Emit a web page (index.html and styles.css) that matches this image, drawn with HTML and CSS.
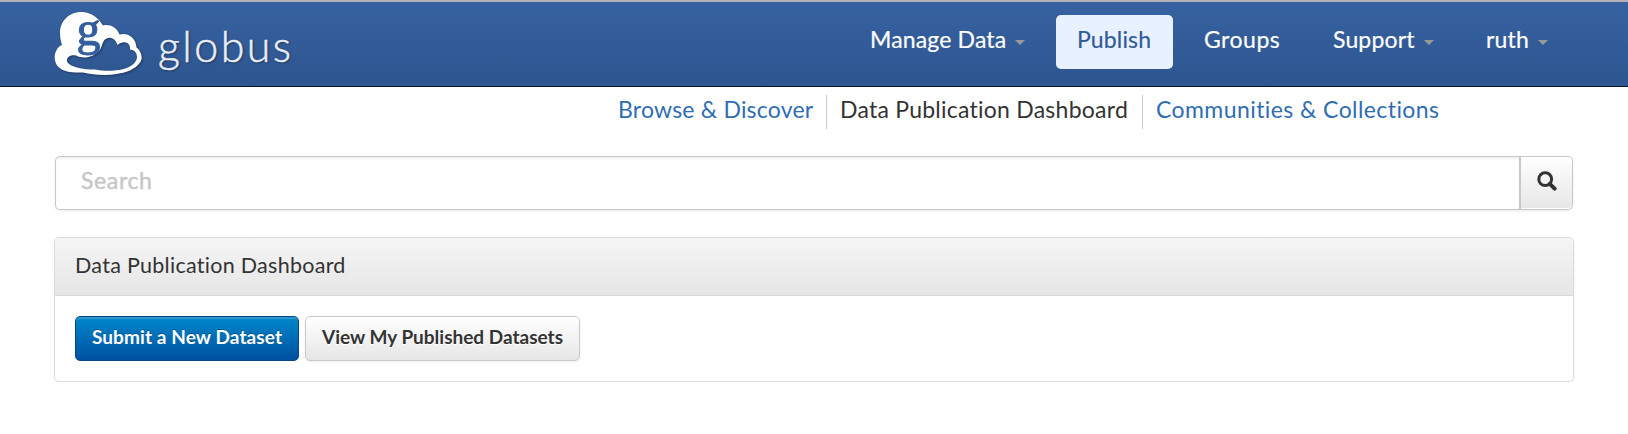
FILE: index.html
```html
<!DOCTYPE html>
<html lang="en">
<head>
<meta charset="utf-8">
<title>Globus</title>
<link rel="stylesheet" href="styles.css">
</head>
<body>
<header class="topbar">
  <a class="brand">
    <svg class="cloud" viewBox="0 0 90 66" width="90" height="66">
      <path fill="#fff" fill-rule="evenodd" d="M7 33C-1 36 -3 50 4 55.500C9 60 18 61 28 60.500C42 64 62 64 75 58.500C84 54 87 49 86.700 45C86 40 84 37 81.500 35.500C81 26 73 20 64.500 22.500C61 14 54 12 48 13.500C43 5 35 0 26.500 0C13 0 5 10 5 21C5 26 6 30 7 33ZM42.500 40C47 37 46.500 32 49 28.500C53 24 60 25 62.500 33C68 28 76 30 75 37.500C82 38 84.500 46 79 51.500C70 60 51 59.500 40 57.500C27 58 12 54 12 48.500C12 44 17 42.500 21 43.500C29 47.500 38 45 42.500 40Z"/>
      <text class="cloud-g" x="21.500" y="32.500">g</text>
    </svg>
    <span class="wordmark">globus</span>
  </a>
  <nav class="nav">
    <a class="item manage"><span>Manage Data</span><i class="caret"></i></a>
    <a class="item active"><span>Publish</span></a>
    <a class="item groups"><span>Groups</span></a>
    <a class="item support"><span>Support</span><i class="caret"></i></a>
    <a class="item user"><span>ruth</span><i class="caret"></i></a>
  </nav>
</header>
<nav class="subnav">
  <a class="sub browse">Browse &amp; Discover</a>
  <a class="sub dash">Data Publication Dashboard</a>
  <a class="sub comm">Communities &amp; Collections</a>
</nav>
<main class="content">
  <form class="search">
    <input class="field" type="text" placeholder="Search">
    <button class="go" type="button" aria-label="Search">
      <svg width="20" height="20" viewBox="0 0 20 20"><circle cx="8.2" cy="8.2" r="6.4" fill="none" stroke="#333" stroke-width="3"/><path d="M12.8 12.8L17.6 17.6" stroke="#333" stroke-width="4" stroke-linecap="round"/></svg>
    </button>
  </form>
  <section class="panel">
    <h1 class="panel-title">Data Publication Dashboard</h1>
    <div class="panel-body">
      <button class="btn primary" type="button">Submit a New Dataset</button>
      <button class="btn plain" type="button">View My Published Datasets</button>
    </div>
  </section>
</main>
</body>
</html>
```
FILE: styles.css
```css
* { box-sizing: border-box; }
body { margin: 0; background: #fff; color: #333; font-family: Lato, "Liberation Sans", sans-serif; font-size: 23px; font-variant-ligatures: none; }
.topbar { display: flex; justify-content: space-between; height: 87px; padding: 10px 58px 0 55px; border-top: 2px solid #b1b1b6; border-bottom: 1px solid #0b1422; background: linear-gradient(#3762a1, #2d558f); }
.brand { display: flex; color: #fff; }
.cloud { display: block; overflow: visible; filter: drop-shadow(1px 1px 1px rgba(0,0,0,.35)); }
.cloud-g { font: 400 48px "Liberation Serif", serif; fill: #335e9d; stroke: #335e9d; stroke-width: 1px; }
.wordmark { margin: 8px 0 0 13px; font-weight: 300; font-size: 43px; line-height: 52px; letter-spacing: 2.4px; color: #e9eef6; -webkit-text-stroke: .5px #e9eef6; text-shadow: 1px 1px 2px rgba(0,0,0,.5); }
.nav { display: flex; padding-top: 3px; }
.item { display: flex; height: 54px; line-height: 49px; color: #fff; white-space: nowrap; letter-spacing: .15px; -webkit-text-stroke: .2px; }
.caret { width: 10px; height: 5px; margin: 25px 0 0 10px; background: #999; clip-path: polygon(0 0, 100% 0, 50% 100%); }
.manage { width: 186px; }
.manage span { width: 135px; }
.active { width: 117px; padding-left: 21px; margin-right: 31px; border-radius: 5px; background: #e8f1ff; color: #32599a; }
.groups { width: 129px; letter-spacing: .5px; }
.support { width: 153px; }
.support span { width: 81px; }
.user { width: 84px; }
.user span { width: 42px; }
.subnav { display: flex; height: 69px; padding: 8px 0 0 618px; }
.sub { height: 34px; line-height: 29px; white-space: nowrap; color: #2f6db3; }
.browse { width: 208px; letter-spacing: .2px; }
.dash { width: 317px; padding-left: 13px; border: solid #ccc; border-width: 0 1px; color: #333; letter-spacing: .24px; }
.comm { padding-left: 13px; letter-spacing: .42px; }
.content { padding: 0 54px; }
.search { display: flex; height: 54px; margin: 0 0 27px 1px; width: 1518px; border-radius: 5px; box-shadow: 0 1px 3px rgba(0,0,0,.08); }
.field { flex: 1; min-width: 0; padding: 0 25px 6px; border: 1px solid #c8c8ca; border-right: 0; border-radius: 5px 0 0 5px; box-shadow: inset 0 2px 2px rgba(0,0,0,.06); font: 400 23px Lato, sans-serif; letter-spacing: .65px; }
.field::placeholder { color: #c6c6c6; opacity: 1; -webkit-text-stroke: .4px #c6c6c6; }
.go { width: 54px; padding: 0 0 4px; display: flex; align-items: center; justify-content: center; border: 1px solid #c8c8ca; border-left-width: 2px; border-radius: 0 5px 5px 0; background: linear-gradient(#fff, #e6e6e6); box-shadow: inset 0 -1px #fff; }
.panel { height: 145px; border: 1px solid #dbdbdb; border-radius: 5px; box-shadow: 0 1px 3px rgba(0,0,0,.06); overflow: hidden; }
.panel-title { height: 58px; margin: 0; padding-left: 20px; border-bottom: 1px solid #d8d8d8; background: linear-gradient(#f5f5f5, #e6e6e6); font-weight: 400; font-size: 21.5px; line-height: 54px; letter-spacing: .28px; }
.panel-body { display: flex; gap: 6px; padding: 20px; }
.btn { height: 45px; padding: 0 0 4px; border: 1px solid #c9c9cb; border-radius: 5px; font: 700 19px Lato, sans-serif; white-space: nowrap; color: #333; }
.primary { width: 224px; color: #fff; border-color: #064580; background: linear-gradient(#0088cc, #0050a0); box-shadow: inset 0 2px rgba(255,255,255,.15); text-shadow: 0 -1px rgba(0,0,0,.25); letter-spacing: .1px; }
.plain { width: 275px; background: linear-gradient(#fff, #e6e6e6); box-shadow: 0 1px 2px rgba(0,0,0,.08); text-shadow: 0 1px #fff; }
```
